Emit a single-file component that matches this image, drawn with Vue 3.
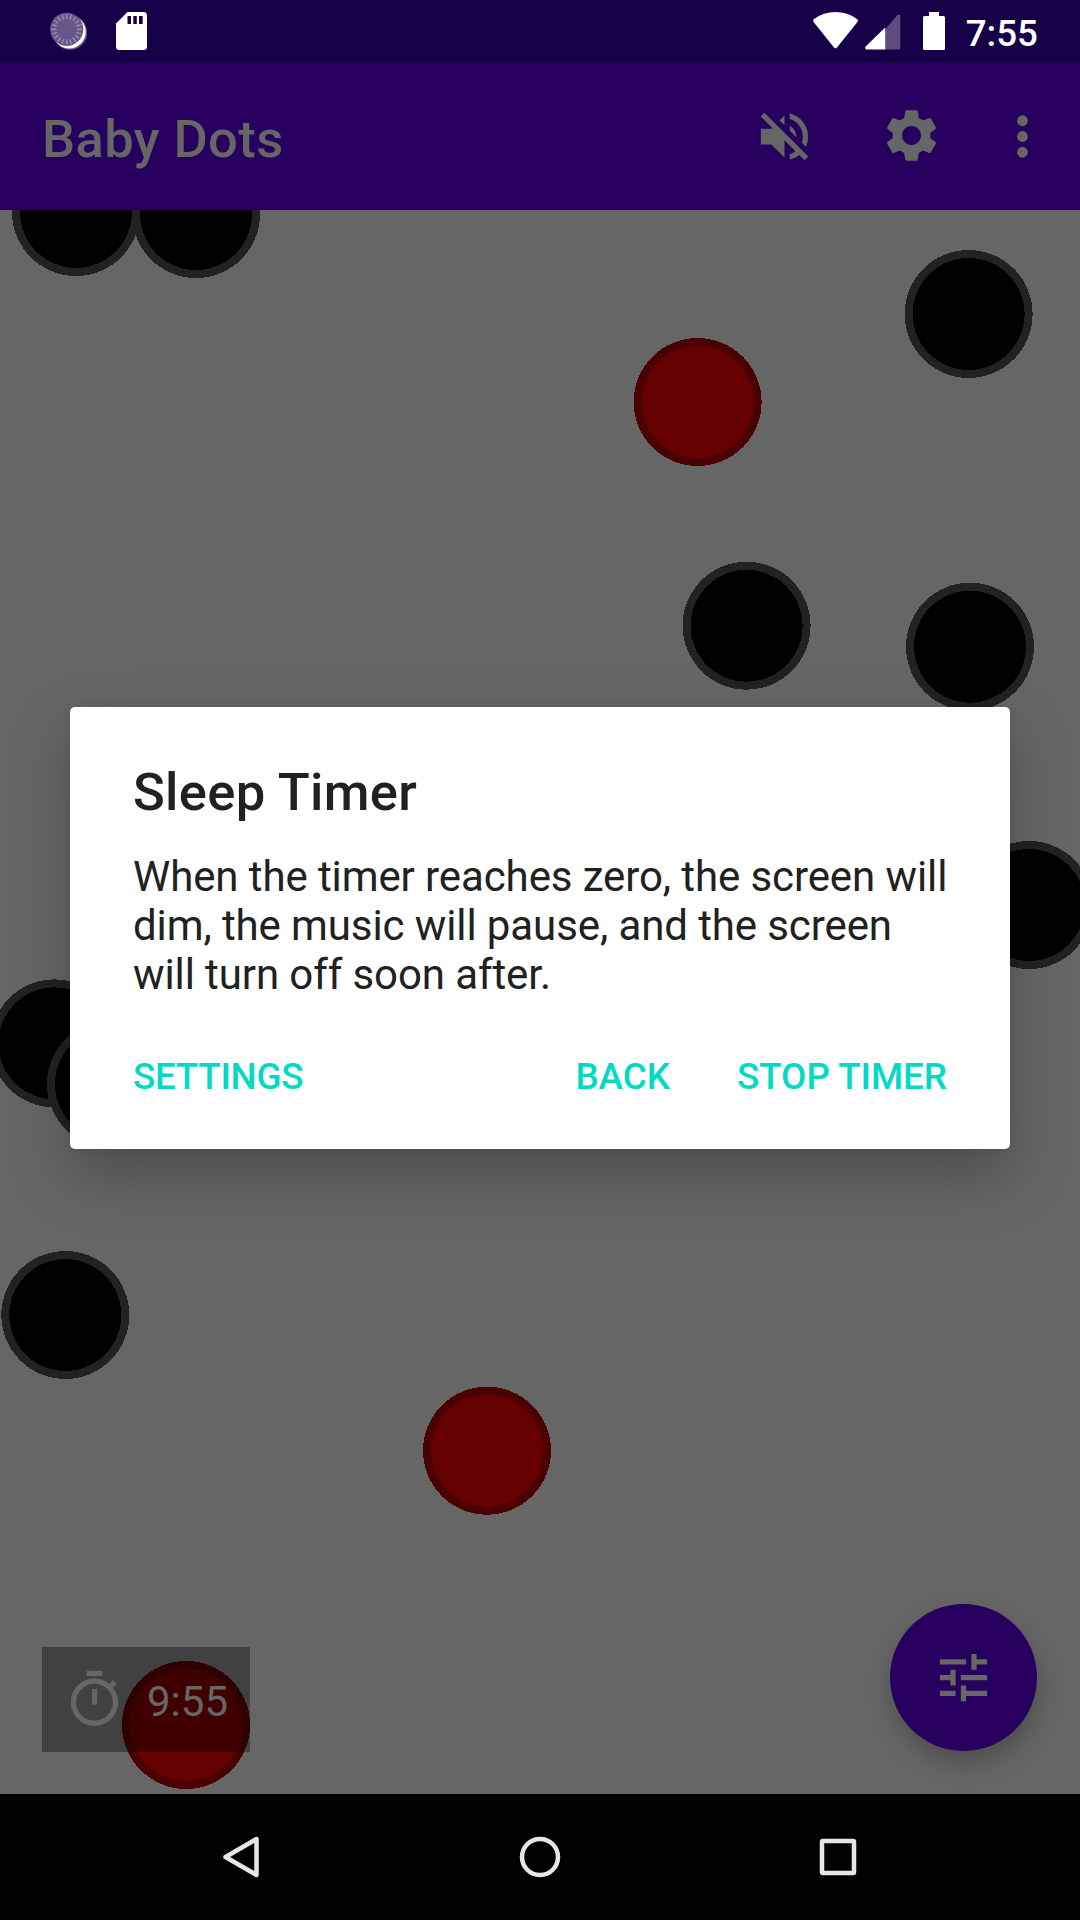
<script setup>
const dots = [
  { x: 76, y: 212 },
  { x: 196, y: 214 },
  { x: 968.6, y: 314 },
  { x: 697.6, y: 402, red: true },
  { x: 746.6, y: 625.7 },
  { x: 970, y: 646.7 },
  { x: 1029, y: 905 },
  { x: 54.4, y: 1043.400 },
  { x: 111, y: 1084 },
  { x: 65.300, y: 1315 },
  { x: 487, y: 1450.700, red: true },
  { x: 186, y: 1725, red: true },
]
const ticks = Array.from({ length: 20 }, (_, i) => i * 18)
</script>

<template>
  <div class="screen">
    <header class="status">
      <div class="status-left">
        <svg class="spin" width="40" height="40" viewBox="0 0 40 40">
          <circle cx="23" cy="22.500" r="17.200" fill="#fff" opacity=".35" />
          <circle cx="22.200" cy="21.900" r="16.500" fill="#fff" />
          <circle cx="19.700" cy="19.300" r="16.600" fill="#68568a" />
          <g stroke="#a096b6" stroke-width="1.200">
            <line v-for="t in ticks" :key="t" x1="19.700" y1="4" x2="19.700" y2="9" :transform="`rotate(${t} 19.7 19.3)`" />
          </g>
        </svg>
        <svg width="31" height="38" viewBox="0 0 31 38">
          <path fill="#fff" fill-rule="evenodd" d="M11.500 0H27.500Q31 0 31 3.500V34.500Q31 38 27.500 38H3.500Q0 38 0 34.500V11.500ZM11.500 4V12H15V4ZM17.300 4V12H20.800V4ZM23 4V12H26.700V4Z" />
        </svg>
      </div>
      <div class="status-right">
        <svg width="45" height="37" viewBox="0 0 45 37">
          <path fill="#fff" d="M.6 10Q-.6 8.200 1 7Q10.500 0 22.500 0T44 7Q45.600 8.200 44.400 10L24 35.500Q22.500 37.200 21 35.500Z" />
        </svg>
        <svg class="cell" width="36" height="36" viewBox="0 0 36 36">
          <path fill="#5d4d80" d="M20 15.500L32.500 1Q35 -.5 35.300 2V33.500Q35.300 35.500 33.500 35.500H20Z" />
          <path fill="#fff" d="M20.200 13.500V35.500H1.500Q-.5 34.800 .6 32.500Z" />
        </svg>
        <svg class="battery" width="22" height="38" viewBox="0 0 22 38">
          <path fill="#fff" d="M6 0H16V4H20.500Q22 4 22 5.500V36.500Q22 38 20.500 38H1.500Q0 38 0 36.500V5.500Q0 4 1.500 4H6Z" />
        </svg>
        <span class="clock">7:55</span>
      </div>
    </header>

    <div class="appbar">
      <h1>Baby Dots</h1>
      <svg class="icon" viewBox="0 0 24 24">
        <path d="M4.340 2.930L2.930 4.340 7.290 8.700 7 9H3v6h4l5 5v-6.590l4.180 4.180c-.65.49-1.380.88-2.180 1.110v2.060c1.340-.3 2.570-.92 3.610-1.750l2.050 2.050 1.410-1.410L4.340 2.930zM19 12c0 .82-.15 1.610-.41 2.340l1.530 1.530c.56-1.170.88-2.480.88-3.870 0-4.280-2.990-7.860-7-8.770v2.060c2.890.86 5 3.540 5 6.710zM12 4l-1.880 1.880L12 7.760V4zm4.500 8c0-1.770-1.020-3.290-2.500-4.030v1.790l2.480 2.480c.01-.08.02-.16.02-.24z" />
      </svg>
      <svg class="icon gear" viewBox="0 0 24 24">
        <path d="M19.140,12.940c0.040-0.300,0.060-0.610,0.060-0.940c0-0.320-0.020-0.640-0.070-0.940l2.030-1.580c0.180-0.140,0.230-0.410,0.120-0.610 l-1.920-3.320c-0.120-0.220-0.370-0.290-0.590-0.220l-2.390,0.960c-0.500-0.380-1.030-0.700-1.620-0.940L14.400,2.810c-0.040-0.240-0.240-0.410-0.480-0.410 h-3.840c-0.240,0-0.430,0.170-0.470,0.410L9.250,5.350C8.660,5.590,8.120,5.920,7.630,6.290L5.240,5.330c-0.220-0.080-0.470,0-0.590,0.220L2.740,8.870 C2.620,9.080,2.660,9.340,2.860,9.480l2.030,1.580C4.840,11.360,4.800,11.690,4.800,12s0.020,0.640,0.070,0.940l-2.030,1.580 c-0.180,0.140-0.230,0.410-0.120,0.610l1.920,3.320c0.120,0.220,0.370,0.290,0.590,0.220l2.390-0.960c0.500,0.380,1.030,0.700,1.620,0.940l0.360,2.540 c0.050,0.240,0.240,0.410,0.480,0.410h3.840c0.240,0,0.440-0.170,0.470-0.410l0.360-2.540c0.590-0.240,1.130-0.560,1.620-0.940l2.390,0.960 c0.220,0.080,0.470,0,0.590-0.220l1.920-3.320c0.120-0.220,0.070-0.470-0.120-0.610L19.140,12.940z M12,15.600c-1.980,0-3.600-1.620-3.600-3.600 s1.620-3.600,3.600-3.600s3.600,1.620,3.600,3.600S13.980,15.600,12,15.600z" />
      </svg>
      <svg class="icon more" viewBox="0 0 24 24">
        <circle cx="12" cy="6" r="2.050" /><circle cx="12" cy="12" r="2.050" /><circle cx="12" cy="18" r="2.050" />
      </svg>
    </div>

    <main class="stage">
      <svg class="canvas" width="1080" height="1584" viewBox="0 210 1080 1584" shape-rendering="crispEdges">
        <g v-for="(d, i) in dots" :key="i">
          <circle :cx="d.x" :cy="d.y" r="64" :fill="d.red ? '#4a0000' : '#222'" />
          <circle :cx="d.x" :cy="d.y" r="56" :fill="d.red ? '#660000' : '#000'" />
        </g>
      </svg>

      <section class="dialog">
        <h2>Sleep Timer</h2>
        <p>When the timer reaches zero, the screen will dim, the music will pause, and the screen will turn off soon after.</p>
        <div class="actions">
          <span class="settings">SETTINGS</span>
          <span class="back">BACK</span>
          <span class="stop">STOP TIMER</span>
        </div>
      </section>

      <div class="timer">
        <svg class="icon" viewBox="0 0 24 24">
          <path d="M15 1H9v2h6V1zm-4 13h2V8h-2v6zm8.030-6.610l1.420-1.420c-.43-.51-.9-.99-1.410-1.410l-1.420 1.420C16.070 4.740 14.120 4 12 4c-4.970 0-9 4.030-9 9s4.020 9 9 9 9-4.030 9-9c0-2.120-.74-4.070-1.970-5.610zM12 20c-3.870 0-7-3.130-7-7s3.130-7 7-7 7 3.130 7 7-3.130 7-7 7z" />
        </svg>
        <span>9:55</span>
      </div>

      <div class="fab">
        <svg class="icon" viewBox="0 0 24 24">
          <path d="M3 17v2h6v-2H3zM3 5v2h10V5H3zm10 16v-2h8v-2h-8v-2h-2v6h2zM7 9v2H3v2h4v2h2V9H7zm14 4v-2H11v2h10zm-6-4h2V7h4V5h-4V3h-2v6z" />
        </svg>
      </div>
    </main>

    <nav class="navbar">
      <svg width="42" height="42" viewBox="0 0 42 42"><path d="M35.500 3V39L4.500 21Z" /></svg>
      <svg width="42" height="42" viewBox="0 0 42 42"><circle cx="21" cy="21" r="18" /></svg>
      <svg width="42" height="42" viewBox="0 0 42 42"><rect x="5" y="5" width="32" height="32" rx="1" /></svg>
    </nav>
  </div>
</template>

<style>
body { margin: 0; background: #000; }
</style>

<style scoped>
.screen {
  width: 1080px;
  height: 1920px;
  display: flex;
  flex-direction: column;
  overflow: hidden;
  font-family: Roboto, "Liberation Sans", sans-serif;
  background: #666;
}
svg { display: block; flex: none; }
.status {
  height: 63px;
  flex: none;
  background: #160047;
  display: flex;
  justify-content: space-between;
}
.status-left { display: flex; padding: 10px 0 0 47px; gap: 29px; align-items: flex-start; }
.status-left svg:last-child { margin-top: 2px; }
.status-right { display: flex; align-items: flex-start; padding: 12px 42px 0 0; color: #fff; }
.status-right .cell { margin: 2px 0 0 7px; }
.status-right .battery { margin-left: 22px; }
.clock { margin-left: 20.500px; font-size: 36.750px; font-weight: 500; line-height: 43px; }
.appbar {
  height: 147px;
  flex: none;
  background: #27005f;
  color: #666;
  display: flex;
  align-items: center;
  padding: 0 26px 0 42px;
}
.appbar h1 { margin: 5px auto 0 0; font-size: 52.500px; font-weight: 500; line-height: 62px; letter-spacing: .4px; }
.icon { width: 63px; height: 63px; fill: #666; }
.gear { margin: 0 48px 2px 64px; }
.stage { position: relative; height: 1584px; flex: none; overflow: hidden; }
.dialog {
  position: absolute;
  left: 70px;
  top: 497px;
  width: 940px;
  height: 442px;
  box-sizing: border-box;
  padding: 54px 63px 0;
  background: #fff;
  border-radius: 5px;
  color: #212121;
  box-shadow: 0 26px 60px rgba(0, 0, 0, .25), 0 0 10px rgba(0, 0, 0, .06);
}
.dialog h2 { margin: 0; font-size: 52.500px; font-weight: 500; line-height: 62px; letter-spacing: .33px; }
.dialog p { margin: 29px -10px 0 0; font-size: 42px; line-height: 49px; letter-spacing: -.1px; }
.actions {
  display: flex;
  margin-top: 56px;
  color: #03dac5;
  font-size: 36.750px;
  font-weight: 500;
  line-height: 43px;
}
.settings { letter-spacing: -.25px; }
.back { margin-left: auto; }
.stop { margin-left: 67px; }
.timer {
  position: absolute;
  left: 42px;
  top: 1437px;
  width: 208px;
  height: 105px;
  box-sizing: border-box;
  padding: 0 21px;
  display: flex;
  align-items: center;
  background: rgba(0, 0, 0, .36);
  color: #666;
  font-size: 42px;
}
.timer span { margin: 4px 0 0 21px; line-height: 49px; }
.fab {
  position: absolute;
  left: 890px;
  top: 1394px;
  width: 147px;
  height: 147px;
  border-radius: 50%;
  background: #27005f;
  display: grid;
  place-items: center;
  box-shadow: 2px 12px 24px rgba(0, 0, 0, .24);
}
.navbar {
  height: 126px;
  flex: none;
  background: #000;
  display: flex;
  justify-content: center;
  align-items: center;
  gap: 256px;
}
.navbar svg { fill: none; stroke: #e6e6e6; stroke-width: 4.500px; stroke-linejoin: round; }
</style>
